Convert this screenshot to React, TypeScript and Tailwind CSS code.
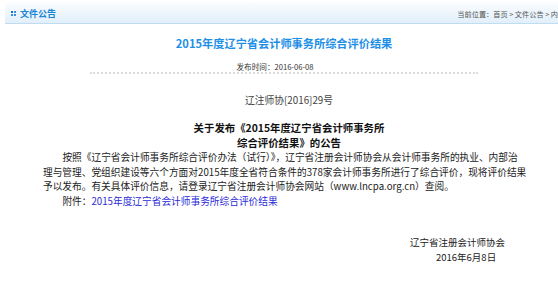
const Header = () => {
  return (
    <div className="mt-[2px] ml-[5px] h-[22px] flex items-center pt-[3px] bg-gradient-to-b from-[#fbfdff] to-[#e1effa] border-b border-[#bfdcf1]">
      <div className="ml-[6px] mb-[2px] grid grid-cols-2 gap-[1px] w-[5px] h-[5px]">
        <span className="bg-[#1f6fc8]" />
        <span className="bg-[#3b8fe0]" />
        <span className="bg-[#3b8fe0]" />
        <span className="bg-[#3b8fe0]" />
      </div>
      <div className="ml-[4px] text-[9px] leading-[12px] font-bold text-[#1784d6]">文件公告</div>
      <div className="flex-1" />
      <div className="shrink-0 whitespace-nowrap text-[7.2px] leading-[12px] text-[#555]">
        当前位置：首页 &gt; 文件公告 &gt; 内
      </div>
    </div>
  );
};

const App = () => {
  return (
    <div className="w-[558px] h-[290px] overflow-hidden bg-white font-['Noto_Sans_CJK_SC','Liberation_Sans',sans-serif]">
      <Header />
      <div className="pl-[10px]">
        <div className="mt-[11px] text-center text-[11.2px] leading-[16px] font-bold text-[#1e8fe6]">
          2015年度辽宁省会计师事务所综合评价结果
        </div>
        <div className="mt-[10px] pr-[18px] text-center text-[7.6px] leading-[11px] text-[#333]">
          发布时间：2016-06-08
        </div>
      </div>
      <div className="ml-[90px] w-[388px] border-b-2 border-dotted border-[#dcdcdc]" />

      <div className="ml-[43px] w-[492px] text-[#222]">
        <div className="mt-[19px] text-center text-[9.8px] leading-[14px] text-[#444]">辽注师协[2016]29号</div>
        <div className="mt-[13px] text-center text-[10.4px] leading-[15px] font-bold text-[#111]">
          关于发布《2015年度辽宁省会计师事务所
          <br />
          综合评价结果》的公告
        </div>
        <div className="text-[9.7px] leading-[14.5px] whitespace-nowrap">
          <div className="indent-[2em]">
            按照《辽宁省会计师事务所综合评价办法（试行）》，辽宁省注册会计师协会从会计师事务所的执业、内部治
          </div>
          <div>理与管理、党组织建设等六个方面对2015年度全省符合条件的378家会计师事务所进行了综合评价，现将评价结果</div>
          <div>予以发布。有关具体评价信息，请登录辽宁省注册会计师协会网站（www.lncpa.org.cn）查阅。</div>
          <div className="indent-[2em]">
            附件：<span className="text-[#2b2bd9]">2015年度辽宁省会计师事务所综合评价结果</span>
          </div>
        </div>
      </div>

      <div className="mt-[27px] text-[9.5px] leading-[15px] text-[#222] whitespace-nowrap">
        <div className="pl-[410px]">辽宁省注册会计师协会</div>
        <div className="pl-[436px]">2016年6月8日</div>
      </div>
    </div>
  );
};

export default App;
